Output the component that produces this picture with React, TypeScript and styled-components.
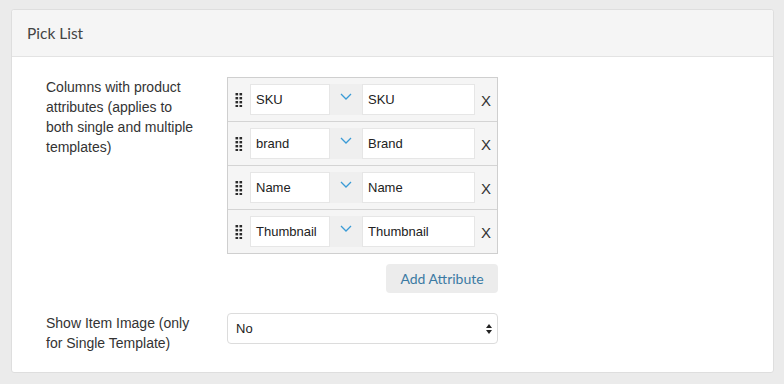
import React from 'react';
import styled, { createGlobalStyle } from 'styled-components';

const GlobalStyle = createGlobalStyle`
  body {
    margin: 0;
    background: #ebebeb;
    font-family: "Liberation Sans", Arial, sans-serif;
    color: #333;
  }
`;

const Page = styled.div`
  padding: 9px 10px 10px 11px;
`;

const Panel = styled.section`
  width: 761px;
  background: #fff;
  border: 1px solid #dedede;
  border-radius: 3px;
`;

const PanelHeader = styled.header`
  height: 46px;
  display: flex;
  align-items: center;
  padding-left: 15px;
  background: #f5f5f5;
  border-bottom: 1px solid #e3e3e3;
  border-radius: 3px 3px 0 0;
`;

const Title = styled.h2`
  margin: 0;
  font-family: Lato, "Open Sans", sans-serif;
  font-weight: 400;
  font-size: 15.5px;
  color: #444;
`;

const PanelBody = styled.div`
  padding: 20px 0 19px 34px;
  display: flex;
  flex-direction: column;
  gap: 20px;
`;

const FormGroup = styled.div`
  display: grid;
  grid-template-columns: 181px 271px;
`;

const Label = styled.label`
  font-size: 14px;
  line-height: 20px;
  color: #333;
  padding-right: 26px;
`;

const Control = styled.div`
  display: flex;
  flex-direction: column;
  align-items: flex-end;
  gap: 10px;
`;

const AttrTable = styled.div`
  width: 100%;
  box-sizing: border-box;
  border: 1px solid #cfcfcf;
  background: #f5f5f5;
`;

const AttrRow = styled.div`
  height: 43px;
  display: flex;
  align-items: center;
  padding-left: 7px;
  & + & {
    border-top: 1px solid #d4d4d4;
  }
`;

const Handle = styled.svg`
  width: 8px;
  height: 14px;
  margin-right: 7px;
  flex: none;
`;

const Field = styled.div`
  height: 31px;
  box-sizing: border-box;
  width: ${(p: { $w: number }) => p.$w}px;
  background: #fff;
  border: 1px solid #e6e6e6;
  display: flex;
  align-items: center;
  padding-left: 5px;
  font-size: 13px;
  color: #222;
`;

const Chevron = styled.div`
  width: 32px;
  height: 31px;
  background: #efefef;
  display: flex;
  justify-content: center;
  padding-top: 9px;
  box-sizing: border-box;
`;

const Remove = styled.span`
  width: 22px;
  text-align: center;
  font-size: 15px;
  color: #333;
  padding-top: 2px;
`;

const AddButton = styled.button`
  height: 29px;
  width: 112px;
  border: none;
  border-radius: 4px;
  background: #ececec;
  color: #3b7aa3;
  font-family: Lato, "Open Sans", sans-serif;
  font-size: 14px;
  padding: 0;
`;

const Select = styled.div`
  height: 31px;
  box-sizing: border-box;
  width: 100%;
  border: 1px solid #dcdcdc;
  border-radius: 4px;
  display: flex;
  align-items: center;
  justify-content: space-between;
  padding: 0 4px 0 8px;
  font-size: 13px;
  color: #222;
`;

const rows = [
  ['SKU', 'SKU'],
  ['brand', 'Brand'],
  ['Name', 'Name'],
  ['Thumbnail', 'Thumbnail'],
];

const DragDots = () => (
  <Handle viewBox="0 0 8 14">
    {[0, 4, 8, 12].map((y) =>
      [0.5, 4.5].map((x) => <rect key={`${x}-${y}`} x={x} y={y} width="2.6" height="2.4" fill="#2a2a2a" />)
    )}
  </Handle>
);

export default function App() {
  return (
    <>
      <GlobalStyle />
      <Page>
        <Panel>
          <PanelHeader>
            <Title>Pick List</Title>
          </PanelHeader>
          <PanelBody>
            <FormGroup>
              <Label>Columns with product attributes (applies to both single and multiple templates)</Label>
              <Control>
                <AttrTable>
                  {rows.map(([key, name]) => (
                    <AttrRow key={key}>
                      <DragDots />
                      <Field $w={80}>{key}</Field>
                      <Chevron>
                        <svg width="12" height="7" viewBox="0 0 12 7">
                          <path d="M1 1l5 5 5-5" fill="none" stroke="#3a9bd6" strokeWidth="1.3" />
                        </svg>
                      </Chevron>
                      <Field $w={113}>{name}</Field>
                      <Remove>X</Remove>
                    </AttrRow>
                  ))}
                </AttrTable>
                <AddButton>Add Attribute</AddButton>
              </Control>
            </FormGroup>
            <FormGroup>
              <Label>Show Item Image (only for Single Template)</Label>
              <Select>
                <span>No</span>
                <svg width="8" height="12" viewBox="0 0 8 12">
                  <path d="M4 1l3 4H1z M4 11l3-4H1z" fill="#222" />
                </svg>
              </Select>
            </FormGroup>
          </PanelBody>
        </Panel>
      </Page>
    </>
  );
}
